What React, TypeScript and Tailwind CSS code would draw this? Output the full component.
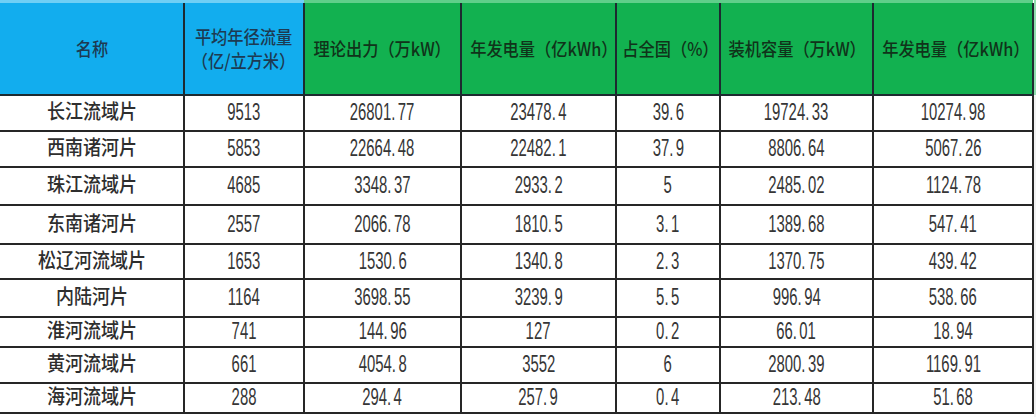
import React from "react";

// 各流域水力资源统计表
const rows: { name: string; h: string; v: string[] }[] = [
  { name: "长江流域片", h: "h-[36px]", v: ["9513", "26801.77", "23478.4", "39.6", "19724.33", "10274.98"] },
  { name: "西南诸河片", h: "h-[36px]", v: ["5853", "22664.48", "22482.1", "37.9", "8806.64", "5067.26"] },
  { name: "珠江流域片", h: "h-[38px]", v: ["4685", "3348.37", "2933.2", "5", "2485.02", "1124.78"] },
  { name: "东南诸河片", h: "h-[39px]", v: ["2557", "2066.78", "1810.5", "3.1", "1389.68", "547.41"] },
  { name: "松辽河流域片", h: "h-[35px]", v: ["1653", "1530.6", "1340.8", "2.3", "1370.75", "439.42"] },
  { name: "内陆河片", h: "h-[38px]", v: ["1164", "3698.55", "3239.9", "5.5", "996.94", "538.66"] },
  { name: "淮河流域片", h: "h-[30px]", v: ["741", "144.96", "127", "0.2", "66.01", "18.94"] },
  { name: "黄河流域片", h: "h-[36px]", v: ["661", "4054.8", "3552", "6", "2800.39", "1169.91"] },
  { name: "海河流域片", h: "h-[30px]", v: ["288", "294.4", "257.9", "0.4", "213.48", "51.68"] },
];

const cjk = "font-['Noto_Sans_CJK_SC','Noto_Sans',sans-serif]";
const num = "font-['Liberation_Sans',sans-serif]";

function Num({ children }: { children: string }) {
  const [a, b] = children.split(".");
  return (
    <span className={`inline-block scale-x-[0.62] text-[24px] leading-none text-[#363636] ${num}`}>
      {a}
      {b !== undefined && <span className="mr-[4px]">.</span>}
      {b}
    </span>
  );
}

function Head({ children, blue }: { children: React.ReactNode; blue?: boolean }) {
  return (
    <th
      className={`border-r-2 border-[#1d2a30] p-0 align-middle font-medium ${
        blue ? "bg-[#12adee]" : "bg-[#12b150]"
      }`}
    >
      <div
        className={`inline-block scale-x-[0.9] whitespace-nowrap text-[18px] leading-[24px] ${
          blue ? "text-[#1d3a52]" : "text-[#10331a]"
        } ${cjk}`}
      >
        {children}
      </div>
    </th>
  );
}

export default function App() {
  return (
    <div className="flex h-[417px] w-[1036px] overflow-hidden bg-white">
      <table className="h-fit w-[1033px] table-fixed border-collapse text-center">
        <colgroup>
          <col className="w-[184px]" />
          <col className="w-[120px]" />
          <col className="w-[157px]" />
          <col className="w-[155px]" />
          <col className="w-[104px]" />
          <col className="w-[153px]" />
          <col className="w-[160px]" />
        </colgroup>
        <thead>
          <tr className="h-[3px]">
            <td colSpan={2} className="bg-[#6fcff5] p-0" />
            <td colSpan={5} className="bg-[#5fcf8a] p-0" />
          </tr>
          <tr className="h-[92px] border-b-2 border-[#1d2a30]">
            <Head blue>名称</Head>
            <Head blue>
              平均年径流量
              <br />
              （亿/立方米）
            </Head>
            <Head>理论出力（万kW）</Head>
            <Head>年发电量（亿kWh）</Head>
            <Head>占全国（%）</Head>
            <Head>装机容量（万kW）</Head>
            <Head>年发电量（亿kWh）</Head>
          </tr>
        </thead>
        <tbody>
          {rows.map((r) => (
            <tr key={r.name} className={`${r.h} border-b-[2.5px] border-[#262626]`}>
              <td className="border-r-2 border-[#262626] p-0">
                <span className={`inline-block scale-x-[0.9] text-[20px] font-medium leading-none text-[#2e2e2e] ${cjk}`}>
                  {r.name}
                </span>
              </td>
              {r.v.map((x, i) => (
                <td key={i} className="border-r-2 border-[#262626] p-0">
                  <Num>{x}</Num>
                </td>
              ))}
            </tr>
          ))}
        </tbody>
      </table>
      <div className="flex w-[3px] flex-col">
        <div className="h-[95px] bg-[#8fdcae]" />
        <div className="flex-1 bg-[#f2f2f2]" />
      </div>
    </div>
  );
}
